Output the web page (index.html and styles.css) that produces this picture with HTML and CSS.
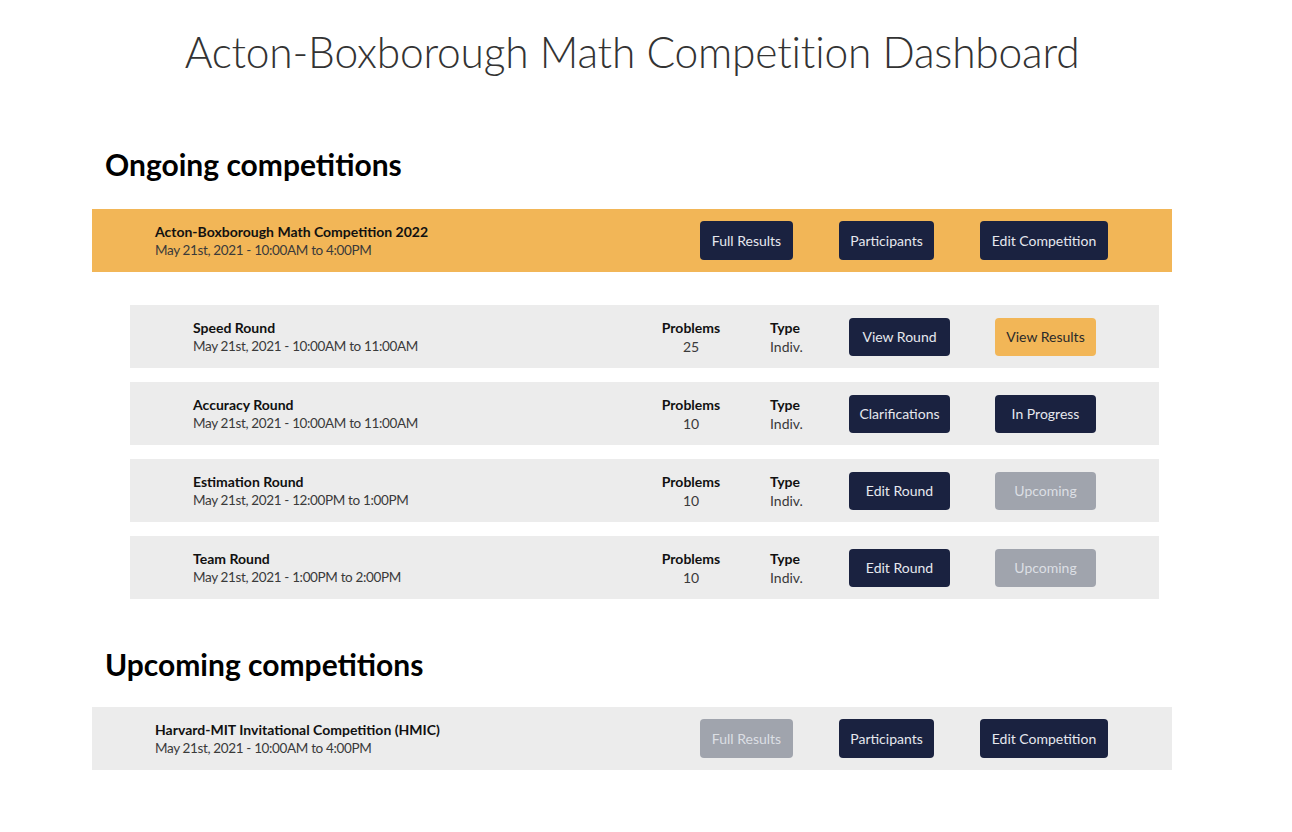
FILE: index.html
```html
<!DOCTYPE html>
<html lang="en">
<head>
<meta charset="utf-8">
<title>Acton-Boxborough Math Competition Dashboard</title>
<link rel="stylesheet" href="styles.css">
</head>
<body>
<main class="page">
  <h1 class="title">Acton-Boxborough Math Competition Dashboard</h1>

  <h2 class="section-title section-ongoing">Ongoing competitions</h2>
  <div class="comp comp-active">
    <div class="info">
      <div class="name">Acton-Boxborough Math Competition 2022</div>
      <div class="date">May 21st, 2021 - 10:00AM to 4:00PM</div>
    </div>
    <div class="actions">
      <button class="btn btn-navy w-results">Full Results</button>
      <button class="btn btn-navy w-participants">Participants</button>
      <button class="btn btn-navy w-edit">Edit Competition</button>
    </div>
  </div>

  <div class="rounds">
    <div class="round">
      <div class="info">
        <div class="name">Speed Round</div>
        <div class="date">May 21st, 2021 - 10:00AM to 11:00AM</div>
      </div>
      <div class="stat stat-problems"><div class="stat-label">Problems</div><div class="stat-value">25</div></div>
      <div class="stat stat-type"><div class="stat-label">Type</div><div class="stat-value">Indiv.</div></div>
      <div class="round-actions">
        <button class="btn btn-navy w-round">View Round</button>
        <button class="btn btn-orange w-round">View Results</button>
      </div>
    </div>
    <div class="round">
      <div class="info">
        <div class="name">Accuracy Round</div>
        <div class="date">May 21st, 2021 - 10:00AM to 11:00AM</div>
      </div>
      <div class="stat stat-problems"><div class="stat-label">Problems</div><div class="stat-value">10</div></div>
      <div class="stat stat-type"><div class="stat-label">Type</div><div class="stat-value">Indiv.</div></div>
      <div class="round-actions">
        <button class="btn btn-navy w-round">Clarifications</button>
        <button class="btn btn-navy w-round">In Progress</button>
      </div>
    </div>
    <div class="round">
      <div class="info">
        <div class="name">Estimation Round</div>
        <div class="date">May 21st, 2021 - 12:00PM to 1:00PM</div>
      </div>
      <div class="stat stat-problems"><div class="stat-label">Problems</div><div class="stat-value">10</div></div>
      <div class="stat stat-type"><div class="stat-label">Type</div><div class="stat-value">Indiv.</div></div>
      <div class="round-actions">
        <button class="btn btn-navy w-round">Edit Round</button>
        <button class="btn btn-disabled w-round">Upcoming</button>
      </div>
    </div>
    <div class="round">
      <div class="info">
        <div class="name">Team Round</div>
        <div class="date">May 21st, 2021 - 1:00PM to 2:00PM</div>
      </div>
      <div class="stat stat-problems"><div class="stat-label">Problems</div><div class="stat-value">10</div></div>
      <div class="stat stat-type"><div class="stat-label">Type</div><div class="stat-value">Indiv.</div></div>
      <div class="round-actions">
        <button class="btn btn-navy w-round">Edit Round</button>
        <button class="btn btn-disabled w-round">Upcoming</button>
      </div>
    </div>
  </div>

  <h2 class="section-title section-upcoming">Upcoming competitions</h2>
  <div class="comp comp-upcoming">
    <div class="info">
      <div class="name">Harvard-MIT Invitational Competition (HMIC)</div>
      <div class="date">May 21st, 2021 - 10:00AM to 4:00PM</div>
    </div>
    <div class="actions">
      <button class="btn btn-disabled w-results">Full Results</button>
      <button class="btn btn-navy w-participants">Participants</button>
      <button class="btn btn-navy w-edit">Edit Competition</button>
    </div>
  </div>
</main>
</body>
</html>
```

FILE: styles.css
```css
* { box-sizing: border-box; }

body {
  margin: 0;
  background: #ffffff;
  font-family: Lato, "Open Sans", sans-serif;
  color: #111111;
}

.page {
  width: 1080px;
  margin-left: 92px;
  padding-bottom: 40px;
}

.title {
  margin: 22px 0 0;
  text-align: center;
  font-size: 42.5px;
  line-height: 60px;
  font-weight: 300;
  color: #333333;
  letter-spacing: -0.2px;
}

.section-title {
  margin: 0;
  padding-left: 13px;
  font-size: 30px;
  line-height: 36px;
  font-weight: 700;
  color: #000000;
}

.section-ongoing { margin-top: 64px; margin-bottom: 27px; }
.section-upcoming { margin-top: 47px; margin-bottom: 25px; }

.comp {
  display: flex;
  align-items: center;
  height: 63px;
  padding: 0 64px 0 63px;
}

.comp-active { background: #f2b657; }
.comp-upcoming { background: #ececec; }

.info { flex: 1; }

.name {
  font-size: 14px;
  font-weight: 700;
  line-height: 19px;
  color: #111111;
}

.date {
  font-size: 13.5px;
  font-weight: 400;
  line-height: 19px;
  letter-spacing: -0.35px;
  color: #3a3a3a;
}

.actions {
  display: flex;
  gap: 46px;
}

.btn {
  height: 39px;
  padding: 0;
  border: none;
  border-radius: 4px;
  font-family: inherit;
  font-size: 14px;
  font-weight: 400;
  text-align: center;
  cursor: pointer;
}

.btn-navy { background: #1a2240; color: #e6e8ee; }
.btn-orange { background: #f2b657; color: #2a2a2a; }
.btn-disabled { background: #a0a4ad; color: #dcdfe4; }

.w-results { width: 93px; }
.w-participants { width: 95px; }
.w-edit { width: 128px; }
.w-round { width: 101px; height: 38px; }

.rounds {
  margin: 33px 13px 0 38px;
  display: flex;
  flex-direction: column;
  gap: 14px;
}

.round {
  display: flex;
  align-items: center;
  height: 63px;
  padding: 0 63px;
  background: #ececec;
}

.stat { font-size: 14px; line-height: 19px; }
.stat-label { font-weight: 700; color: #111111; }
.stat-value { color: #3a3a3a; }

.stat-problems { width: 64px; text-align: center; }
.stat-type { width: 33px; margin-left: 47px; text-align: left; }

.round-actions {
  display: flex;
  gap: 45px;
  margin-left: 46px;
}
```
